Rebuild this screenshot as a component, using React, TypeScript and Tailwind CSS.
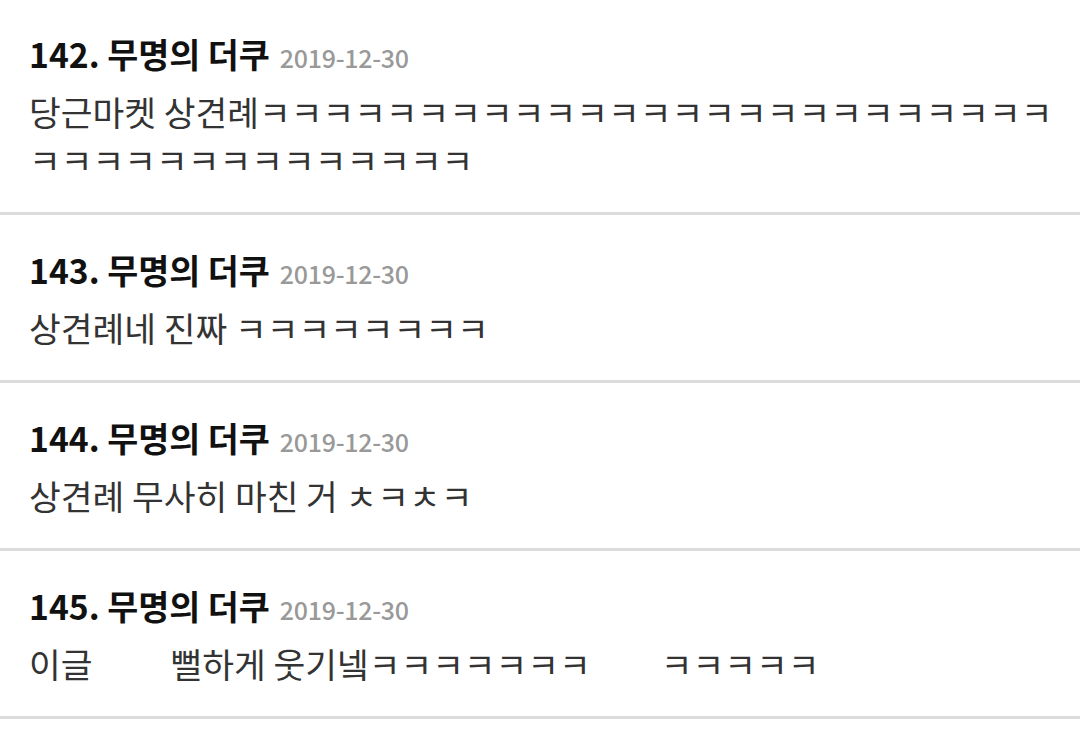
import React from "react";

const font = { fontFamily: '"Noto Sans CJK KR", "Noto Sans", sans-serif' };

type Item = { no: number; body: React.ReactNode };

const Gap = ({ w }: { w: number }) => (
  <span className="inline-block" style={{ width: w }} />
);

const items: Item[] = [
  { no: 142, body: "당근마켓 상견례ㅋㅋㅋㅋㅋㅋㅋㅋㅋㅋㅋㅋㅋㅋㅋㅋㅋㅋㅋㅋㅋㅋㅋㅋㅋㅋㅋㅋㅋㅋㅋㅋㅋㅋㅋㅋㅋㅋㅋ" },
  { no: 143, body: "상견례네 진짜 ㅋㅋㅋㅋㅋㅋㅋㅋ" },
  { no: 144, body: "상견례 무사히 마친 거 ㅊㅋㅊㅋ" },
  {
    no: 145,
    body: (
      <>
        이글
        <Gap w={78} />
        뻘하게 웃기넼ㅋㅋㅋㅋㅋㅋㅋ
        <Gap w={70} />
        ㅋㅋㅋㅋㅋ
      </>
    ),
  },
];

export default function App() {
  return (
    <div className="w-[1080px] h-[743px] overflow-hidden bg-white" style={font}>
      <div className="-mt-[1px]">
        {items.map((it) => (
          <div key={it.no} className="pl-[29px] pr-[24px] pt-[35px] pb-[29px] border-b-[3px] border-[#dcdcdc]">
            <div className="flex items-baseline h-[40px] leading-[40px] whitespace-nowrap">
              <span className="text-[33.7px] font-bold text-[#111]">
                {it.no}. 무명의 더쿠
              </span>
              <span className="ml-[10px] text-[25px] font-medium text-[#999] tracking-[-0.3px]">
                2019-12-30
              </span>
            </div>
            <div className="mt-[13px] text-[34.5px] leading-[48px] text-[#333]">{it.body}</div>
          </div>
        ))}
      </div>
    </div>
  );
}
